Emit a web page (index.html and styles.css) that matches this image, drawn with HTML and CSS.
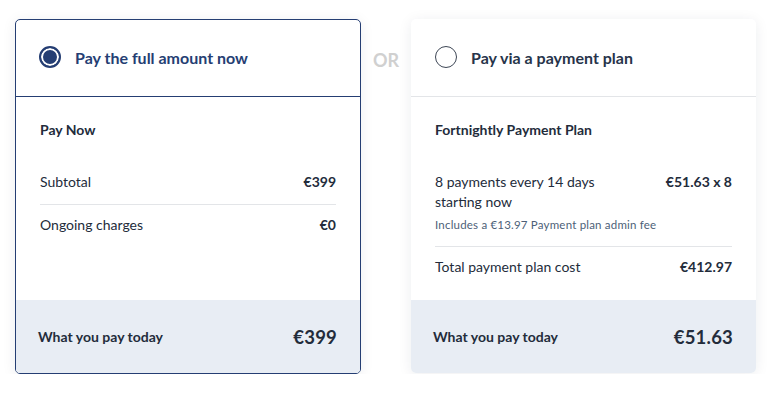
FILE: index.html
```html
<!DOCTYPE html>
<html lang="en">
<head>
<meta charset="utf-8">
<title>Payment options</title>
<link rel="stylesheet" href="styles.css">
</head>
<body>
<div class="options">
  <section class="card card--selected">
    <header class="card-head">
      <span class="radio radio--on"></span>
      <span class="card-title">Pay the full amount now</span>
    </header>
    <div class="card-body">
      <h3 class="body-title">Pay Now</h3>
      <div class="row">
        <span class="label">Subtotal</span>
        <span class="value">€399</span>
      </div>
      <div class="row">
        <span class="label">Ongoing charges</span>
        <span class="value">€0</span>
      </div>
    </div>
    <footer class="card-foot">
      <span class="foot-label">What you pay today</span>
      <span class="foot-value">€399</span>
    </footer>
  </section>

  <div class="or">OR</div>

  <section class="card">
    <header class="card-head">
      <span class="radio"></span>
      <span class="card-title card-title--plain">Pay via a payment plan</span>
    </header>
    <div class="card-body">
      <h3 class="body-title">Fortnightly Payment Plan</h3>
      <div class="row">
        <div class="label">
          <div class="label-main">8 payments every 14 days<br>starting now</div>
          <div class="note">Includes a €13.97 Payment plan admin fee</div>
        </div>
        <span class="value">€51.63 x 8</span>
      </div>
      <div class="row">
        <span class="label">Total payment plan cost</span>
        <span class="value">€412.97</span>
      </div>
    </div>
    <footer class="card-foot">
      <span class="foot-label">What you pay today</span>
      <span class="foot-value">€51.63</span>
    </footer>
  </section>
</div>
</body>
</html>
```

FILE: styles.css
```css
* { box-sizing: border-box; }

html, body {
  margin: 0;
  background: #ffffff;
}

body {
  padding: 19px 12px 0 15px;
  font-family: Lato, "Noto Sans", "Liberation Sans", sans-serif;
  color: #232c3b;
}

.options {
  display: flex;
  align-items: flex-start;
}

.card {
  width: 346px;
  height: 355px;
  display: flex;
  flex-direction: column;
  background: #ffffff;
  border-radius: 5px;
  overflow: hidden;
  box-shadow: 0 2px 14px rgba(30, 40, 60, 0.08);
}

.card--selected {
  border: 1px solid #253e73;
}

.card:not(.card--selected) {
  width: 345px;
  height: 354px;
}

.card-head {
  height: 78px;
  display: flex;
  align-items: center;
  padding: 0 24px;
  border-bottom: 1px solid #e3e5e8;
  flex-shrink: 0;
}

.card--selected .card-head {
  height: 77px;
  padding-left: 23px;
  border-bottom-color: #253e73;
}

.radio {
  width: 22px;
  height: 22px;
  border-radius: 50%;
  border: 1.5px solid #3d4655;
  flex-shrink: 0;
  margin-right: 14px;
  margin-top: -2px;
  background: #fff;
}

.radio--on {
  border: 2px solid #253e73;
  background: #253e73;
  box-shadow: inset 0 0 0 2px #ffffff;
}

.card-title {
  font-size: 16px;
  font-weight: 700;
  color: #253e73;
  margin-top: -1px;
}

.card-title--plain {
  color: #27344a;
}

.card-body {
  flex: 1;
  padding: 23px 24px 0;
}

.body-title {
  margin: 0 0 21px;
  font-size: 14px;
  line-height: 20px;
  font-weight: 700;
  color: #232c3b;
}

.row {
  display: flex;
  justify-content: space-between;
  align-items: flex-start;
  padding: 11px 0 12px;
  font-size: 14px;
  line-height: 20px;
}

.row + .row {
  border-top: 1px solid #e3e5e8;
  padding-top: 10px;
}

.label { color: #232c3b; }

.value {
  font-weight: 700;
  color: #232c3b;
  white-space: nowrap;
}

.note {
  font-size: 11.5px;
  line-height: 16px;
  letter-spacing: 0.2px;
  color: #4d5f78;
  margin-top: 5px;
  margin-bottom: 1px;
}

.card-foot {
  height: 73px;
  flex-shrink: 0;
  display: flex;
  align-items: center;
  justify-content: space-between;
  background: #e8edf4;
  padding: 0 23px 0 22px;
}

.foot-label {
  font-size: 14px;
  font-weight: 700;
  color: #232c3b;
}

.foot-value {
  font-size: 18.5px;
  font-weight: 700;
  color: #232c3b;
  letter-spacing: 0.2px;
}

.or {
  width: 50px;
  flex-shrink: 0;
  text-align: center;
  padding-top: 31px;
  font-size: 18px;
  font-weight: 700;
  color: #d0d0d0;
  line-height: 20px;
}
```
